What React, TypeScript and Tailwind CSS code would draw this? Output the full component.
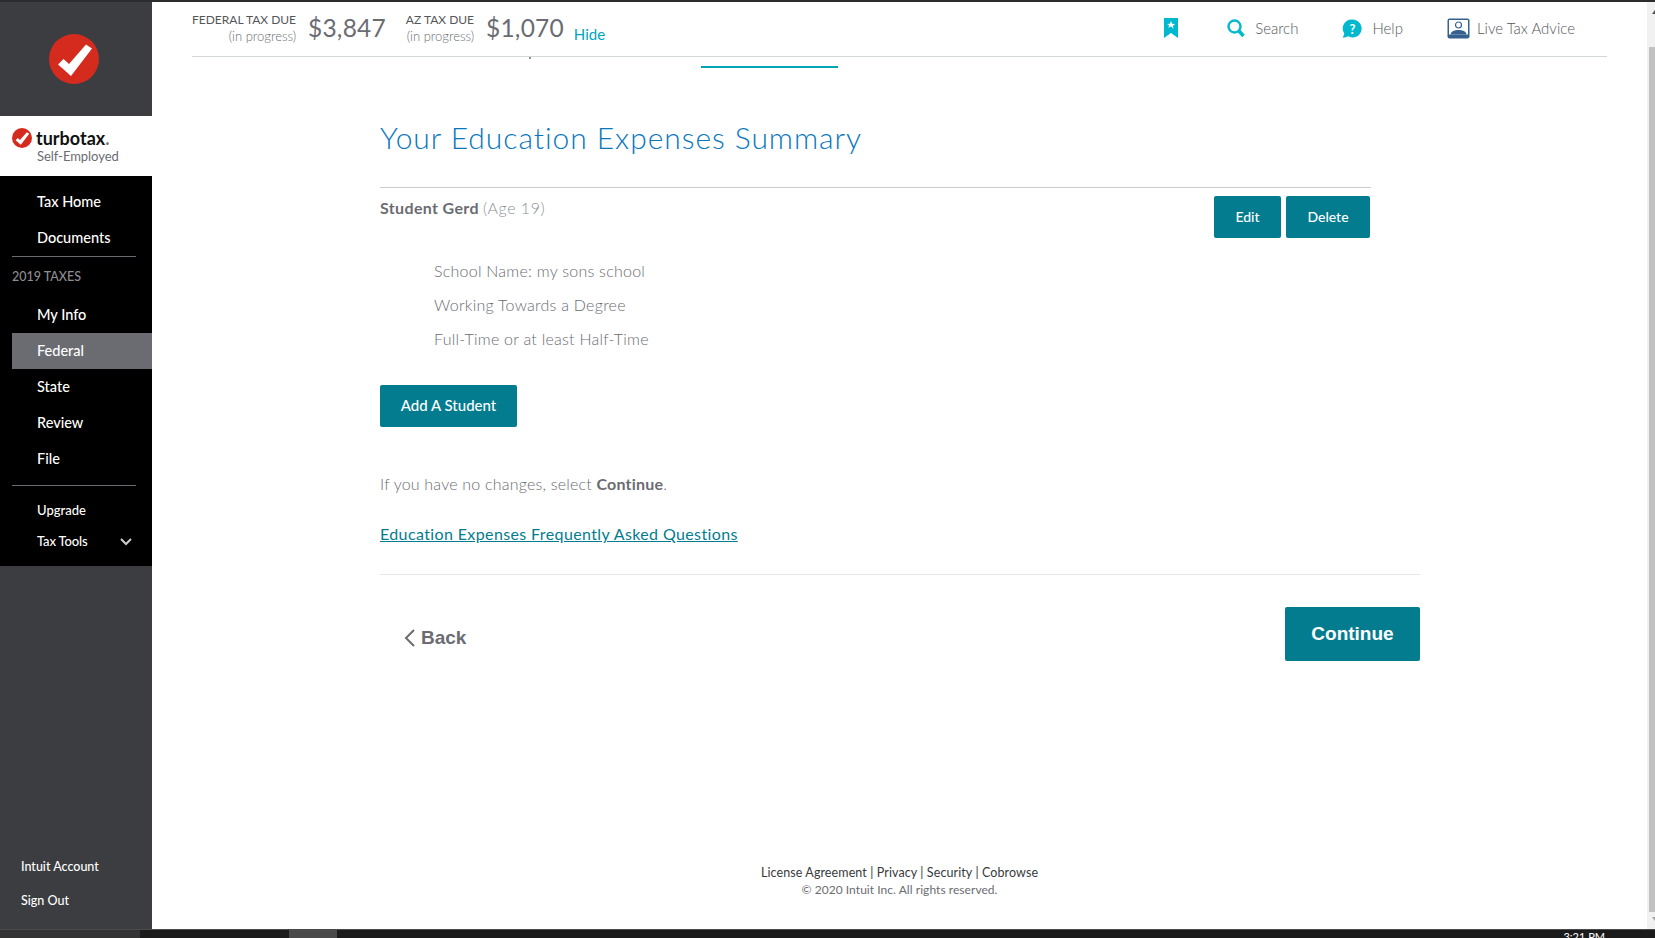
const F = "[font-family:Lato,'Noto_Sans',sans-serif]";

function Check({ size }: { size: number }) {
  return (
    <svg width={size} height={size} viewBox="0 0 50 50">
      <circle cx="25" cy="25" r="25" fill="#d52b1e" />
      <path d="M9 30.5 L14.5 25 L20 30 L37 10.5 L43 14.5 L22 42 Z" fill="#fff" />
    </svg>
  );
}

function NavItem({ label, active, small }: { label: string; active?: boolean; small?: boolean }) {
  return (
    <div className={`ml-3 flex h-9 items-center pl-[25px] ${small ? "text-[13px]" : "text-[14.5px]"} font-medium text-white ${active ? "bg-[#6b6c72]" : ""}`}>
      {label}
    </div>
  );
}

function Sidebar() {
  return (
    <aside className="flex w-[152px] shrink-0 flex-col bg-[#3c3d41]">
      <div className="flex h-[114px] items-center justify-center pr-[4px] pb-[1px]">
        <Check size={50} />
      </div>
      <div className="flex h-[60px] flex-col bg-white pl-3 pt-[12px]">
        <div className="flex h-5 items-center gap-[4px]">
          <Check size={20} />
          <span className="text-[18px] font-bold leading-none text-[#111]">turbotax<span className="text-[#777]">.</span></span>
        </div>
        <div className="ml-[25px] text-[13px] leading-[17px] tracking-[-0.05px] text-[#6b6c72]">Self-Employed</div>
      </div>
      <nav className="flex h-[390px] flex-col bg-black pt-[8px]">
        <NavItem label="Tax Home" />
        <NavItem label="Documents" />
        <div className="ml-3 h-px w-[124px] bg-[#6b6c72]" />
        <div className="ml-3 mt-[12px] mb-[12px] h-4 text-[12.5px] font-medium leading-4 text-[#8d8e93]">2019 TAXES</div>
        <NavItem label="My Info" />
        <NavItem label="Federal" active />
        <NavItem label="State" />
        <NavItem label="Review" />
        <NavItem label="File" />
        <div className="ml-3 mt-[8px] h-px w-[124px] bg-[#6b6c72]" />
        <div className="mt-[7px]">
          <NavItem label="Upgrade" small />
        </div>
        <div className="relative -mt-[4px] -translate-y-[1px] tracking-[-0.15px]">
          <NavItem label="Tax Tools" small />
          <svg className="absolute right-[20px] top-[14px]" width="12" height="8" viewBox="0 0 12 8" fill="none" stroke="#ccc" strokeWidth="2">
            <path d="M1 1 L6 6 L11 1" />
          </svg>
        </div>
      </nav>
      <div className="mt-auto flex flex-col gap-[16px] pb-[19px] pl-[21px] text-[12.5px] font-medium leading-[18px] text-white">
        <div>Intuit Account</div>
        <div>Sign Out</div>
      </div>
    </aside>
  );
}

function Header() {
  return (
    <header className="mx-[40px] flex h-[55px] items-center border-b border-[#d4d7dc] pb-[2px]">
      <div className="text-right text-[12px] font-normal leading-[17px]">
        <div className="text-[#55565a]">FEDERAL TAX DUE</div>
        <div className="text-[13px] font-light text-[#6b6c72]">(in progress)</div>
      </div>
      <div className="ml-3 text-[24.5px] tracking-[0.2px] text-[#6b6c72]">$3,847</div>
      <div className="ml-[20px] text-right text-[12px] leading-[17px]">
        <div className="text-[#55565a]">AZ TAX DUE</div>
        <div className="text-[13px] font-light text-[#6b6c72]">(in progress)</div>
      </div>
      <div className="ml-3 text-[24.5px] tracking-[0.2px] text-[#6b6c72]">$1,070</div>
      <a className="ml-[10px] mt-[12px] text-[15px] text-[#00a6c0]">Hide</a>
      <div className="ml-auto flex items-center text-[15px] font-light text-[#55565a]">
        <svg width="14" height="21" viewBox="0 0 14 21">
          <path d="M0 0H14V20L7 15L0 20Z" fill="#00b9cf" />
          <path d="M7 3l1.2 2.7 2.9.3-2.2 1.9.7 2.9L7 8.4 4.4 9.8l.7-2.9L2.9 6l2.9-.3Z" fill="#fff" />
        </svg>
        <svg className="ml-[49px]" width="18" height="19" viewBox="0 0 18 19" fill="none">
          <circle cx="7.5" cy="7.5" r="6" stroke="#00b9cf" strokeWidth="2.4" />
          <path d="M12 12 L16.5 17" stroke="#00b9cf" strokeWidth="3.4" />
        </svg>
        <span className="ml-[10px]">Search</span>
        <svg className="ml-[44px]" width="20" height="19" viewBox="0 0 20 19">
          <path d="M10.5 0.5a9 9 0 1 1-4.4 16.8C4.500 18.300 2.500 18.700 0.500 18.500 1.500 17.500 2.200 16 2.200 14.300A9 9 0 0 1 10.500 0.500Z" fill="#00b9cf" />
          <text x="10.500" y="14.500" textAnchor="middle" fontSize="13" fontWeight="700" fill="#fff" fontFamily="Lato">?</text>
        </svg>
        <span className="ml-[10px]">Help</span>
        <svg className="ml-[44px]" width="23" height="21" viewBox="0 0 23 21">
          <rect x="0.500" y="0.500" width="22" height="20" rx="2" fill="#35618f" />
          <rect x="2" y="2" width="19" height="14.500" fill="#fff" />
          <circle cx="11.500" cy="7" r="3" fill="#fff" stroke="#35618f" strokeWidth="1.200" />
          <path d="M3.500 16.500C4 13 8 12 11.500 12S19 13 19.500 16.500Z" fill="#35618f" />
        </svg>
        <span className="ml-[7px] mr-[32px]">Live Tax Advice</span>
      </div>
    </header>
  );
}

function Btn({ children, cls }: { children: string; cls: string }) {
  return (
    <button className={`flex items-center justify-center rounded-[2px] bg-[#037c8f] pb-[2px] font-medium text-white ${cls}`}>
      {children}
    </button>
  );
}

function Content() {
  return (
    <div className="ml-[228px] w-[1040px]">
      <div className="relative h-[10px]">
        <div className="absolute left-[149px] top-[0px] h-[2px] w-[2px] bg-[#8d9096]" />
        <div className="absolute left-[321px] top-[9px] h-[2px] w-[137px] bg-[#00a6b4]" />
      </div>
      <h1 className="mt-[48px] text-[30px] font-light leading-[44px] tracking-[0.95px] text-[#0a77bd]">Your Education Expenses Summary</h1>
      <div className="mt-[28px] w-[991px] border-t border-[#c9cbce]">
        <div className="flex items-start justify-between pt-[8px]">
          <div className="pt-[1px] text-[16px] leading-[22px] text-[#8d9096]">
            <span className="font-bold tracking-[0.35px] text-[#6b6c72]">Student Gerd</span> <span className="font-light tracking-[0.5px]">(Age 19)</span>
          </div>
          <div className="flex gap-[5px] pr-[1px]">
            <Btn cls="h-[42px] w-[67px] text-[14px]">Edit</Btn>
            <Btn cls="h-[42px] w-[84px] text-[14px]">Delete</Btn>
          </div>
        </div>
      </div>
      <div className="mt-[22px] flex flex-col gap-[12px] pl-[54px] text-[16px] font-light leading-[22px] tracking-[0.25px] text-[#6b6c72]">
        <div>School Name: my sons school</div>
        <div>Working Towards a Degree</div>
        <div>Full-Time or at least Half-Time</div>
      </div>
      <Btn cls="mt-[35px] h-[42px] w-[137px] text-[15px]">Add A Student</Btn>
      <p className="mt-[46px] text-[16px] font-light leading-[22px] tracking-[0.2px] text-[#6b6c72]">
        If you have no changes, select <span className="font-bold">Continue</span>.
      </p>
      <a className="mt-[28px] block text-[16px] leading-[22px] tracking-[0.38px] text-[#037c8f] underline">Education Expenses Frequently Asked Questions</a>
      <div className="mt-[29px] flex items-start justify-between border-t border-[#e6e7e9] pt-[32px]">
        <div className="mt-[19px] ml-[24px] flex items-center gap-[6px] font-['Liberation_Sans',sans-serif] text-[19px] font-bold leading-[24px] text-[#6b6c72]">
          <svg width="11" height="18" viewBox="0 0 11 18" fill="none" stroke="#6b6c72" strokeWidth="2">
            <path d="M10 1 L2 9 L10 17" />
          </svg>
          Back
        </div>
        <button className="h-[54px] w-[135px] rounded-[2px] bg-[#037c8f] font-['Liberation_Sans',sans-serif] text-[19px] font-bold text-white">Continue</button>
      </div>
      <footer className="mt-[203px] ml-[-1px] text-center text-[12.500px] leading-[17px] tracking-[0.1px] text-[#393a3d]">
        <div>License Agreement | Privacy | Security | Cobrowse</div>
        <div className="text-[12px] tracking-[0.05px] text-[#6b6c72]">© 2020 Intuit Inc. All rights reserved.</div>
      </footer>
    </div>
  );
}

function Scrollbar() {
  return (
    <div className="flex w-[8px] shrink-0 flex-col overflow-hidden bg-[#f1f1f1] pl-[2px]">
      <div className="flex h-[45px] pl-[3px] pt-[8px]">
        <svg className="shrink-0" width="6" height="4" viewBox="0 0 6 4"><path d="M0 4 L3 0 L6 4 Z" fill="#505050" /></svg>
      </div>
      <div className="flex-1 bg-[#c1c1c1]" />
      <div className="flex h-[17px] pl-[3px] pt-[5px]">
        <svg className="shrink-0" width="6" height="4" viewBox="0 0 6 4"><path d="M0 0 L3 4 L6 0 Z" fill="#a3a3a3" /></svg>
      </div>
    </div>
  );
}

export default function App() {
  return (
    <div className={`flex h-[938px] w-[1655px] flex-col overflow-hidden bg-white ${F}`}>
      <div className="h-[2px] shrink-0 bg-[#2b2c2e]" />
      <div className="flex min-h-0 flex-1">
        <Sidebar />
        <main className="min-w-0 flex-1">
          <Header />
          <Content />
        </main>
        <Scrollbar />
      </div>
      <div className="flex h-[9px] shrink-0 border-t border-[#4a4a4a] bg-[#1b1b1b]">
        <div className="w-[140px] bg-[#333]" />
        <div className="ml-[149px] w-[48px] bg-[#4a4a4a]" />
        <div className="ml-auto mr-[50px] text-[11px] leading-[14px] text-white">3:21 PM</div>
      </div>
    </div>
  );
}
